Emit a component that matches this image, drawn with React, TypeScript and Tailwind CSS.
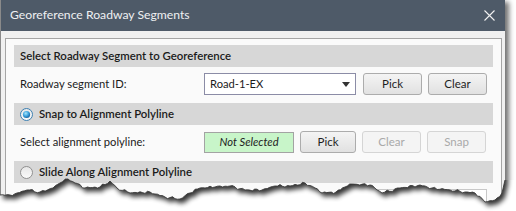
import React from "react";

const FONT = { fontFamily: 'Lato, "Noto Sans", sans-serif' };

// jagged torn-paper edge along the bottom of the screenshot
const EDGE: [number, number][] = [
  [0, 195], [10, 195], [17, 193], [27, 190], [40, 192], [53, 188], [60, 183], [68, 179],
  [75, 183], [85, 188], [100, 187], [110, 181], [117, 188], [130, 193], [150, 192],
  [165, 197], [180, 199], [190, 193], [200, 188], [215, 187], [230, 186], [245, 190],
  [262, 190], [275, 186], [290, 186], [305, 183], [315, 188], [322, 193], [336, 192],
  [345, 187], [352, 184], [370, 185], [382, 193], [400, 188], [420, 185], [432, 188],
  [450, 190], [465, 192], [475, 193], [485, 202], [495, 200], [502, 193], [505, 180],
];

function edgePoints() {
  const pts: [number, number][] = [];
  for (let i = 0; i < EDGE.length - 1; i++) {
    const [x0, y0] = EDGE[i];
    const [x1, y1] = EDGE[i + 1];
    const steps = Math.max(1, Math.round((x1 - x0) / 2.5));
    for (let s = 0; s < steps; s++) {
      const t = s / steps;
      const x = x0 + (x1 - x0) * t;
      const jitter = Math.sin(x * 1.7) * 0.8 + Math.sin(x * 0.53 + 1) * 0.6;
      pts.push([x, y0 + (y1 - y0) * t + (s === 0 ? 0 : jitter)]);
    }
  }
  pts.push(EDGE[EDGE.length - 1]);
  return pts;
}

function TornEdge() {
  const pts = edgePoints();
  const line = pts.map(([x, y], i) => `${i ? "L" : "M"}${x.toFixed(1)},${y.toFixed(1)}`).join(" ");
  const below = `${line} L516,180 L516,211 L0,211 Z`;
  const above = `M0,0 ${line.replace(/^M/, "L")} L505,0 Z`;
  return (
    <svg className="absolute left-0 top-0" width={516} height={211}>
      <defs>
        <filter id="tear-blur" x="-10%" y="-10%" width="130%" height="130%">
          <feGaussianBlur stdDeviation="2.4" />
        </filter>
        <clipPath id="tear-below">
          <path d={below} />
        </clipPath>
      </defs>
      <path d={below} fill="#ffffff" />
      <g clipPath="url(#tear-below)">
        <path d={above} fill="#000" opacity={0.8} filter="url(#tear-blur)" transform="translate(3,4)" />
      </g>
      <path d={line} fill="none" stroke="#3a3a3a" strokeWidth={0.9} />
    </svg>
  );
}

function Btn({ children, w, disabled }: { children: React.ReactNode; w: string; disabled?: boolean }) {
  return (
    <div
      className={`${w} h-[22px] flex items-center justify-center rounded-[3px] border text-[11.5px] ${
        disabled
          ? "border-[#d5d5d5] bg-[#f4f4f4] text-[#a9a9a9]"
          : "border-[#acacac] bg-gradient-to-b from-[#f4f4f4] to-[#e1e1e1] text-[#1e1e1e]"
      }`}
    >
      {children}
    </div>
  );
}

function Radio({ on }: { on?: boolean }) {
  return (
    <svg width={13} height={13} viewBox="0 0 13 13" className="shrink-0">
      <defs>
        <linearGradient id="rg-off" x1="0" y1="0" x2="0" y2="1">
          <stop offset="0" stopColor="#e6e6e6" />
          <stop offset="1" stopColor="#fbfbfb" />
        </linearGradient>
        <radialGradient id="rg-on" cx="0.4" cy="0.35" r="0.7">
          <stop offset="0" stopColor="#a6e6fb" />
          <stop offset="0.55" stopColor="#3aa0dc" />
          <stop offset="1" stopColor="#135a96" />
        </radialGradient>
      </defs>
      <circle cx="6.5" cy="6.5" r="6" fill="url(#rg-off)" stroke={on ? "#3c7fb1" : "#8f8f8f"} strokeWidth="1" />
      {on && <circle cx="6.5" cy="6.5" r="3.6" fill="url(#rg-on)" />}
    </svg>
  );
}

function Band({ children }: { children: React.ReactNode }) {
  return (
    <div className="h-[22px] bg-[#d7d7d7] flex items-center gap-[6px] pl-[6px] text-[11.4px] font-semibold text-[#1b1b1b]">
      {children}
    </div>
  );
}

function Row({ label, children }: { label: string; children: React.ReactNode }) {
  return (
    <div className="h-[22px] mt-[6px] mb-[8px] flex items-center pl-[6px] pr-[6px]">
      <div className="w-[184px] shrink-0 text-[11.2px] text-[#1b1b1b]">{label}</div>
      {children}
    </div>
  );
}

export default function App() {
  return (
    <div className="relative w-[516px] h-[211px] overflow-hidden bg-white" style={FONT}>
      <div className="w-[505px] h-[260px] flex flex-col bg-[#f0f0f0] border-l border-[#8a8a8a] shadow-[4px_2px_5px_rgba(0,0,0,0.55)]">
        <div className="h-[31px] shrink-0 bg-[#4e5a68] flex items-center justify-between pl-[9px] pr-[10px]">
          <span className="text-[12.2px] text-[#eef0f2]">Georeference Roadway Segments</span>
          <svg width={11} height={11} viewBox="0 0 11 11">
            <path d="M0.5 0.5 L10.5 10.5 M10.5 0.5 L0.5 10.5" stroke="#f2f2f2" strokeWidth="1.1" />
          </svg>
        </div>
        <div className="pt-[7px] pl-[4px] pr-[3px]">
          <div className="border border-[#a5a5a5] bg-[#fafafa] pt-[6px] px-[8px]">
            <Band>Select Roadway Segment to Georeference</Band>
            <Row label="Roadway segment ID:">
              <div className="w-[152px] h-[22px] border border-[#8b8ca6] bg-white flex items-center justify-between pl-[5px] pr-[5px] text-[11.2px] text-[#1b1b1b]">
                <span>Road-1-EX</span>
                <svg width={8} height={5} viewBox="0 0 8 5">
                  <path d="M0 0 H8 L4 5 Z" fill="#333" />
                </svg>
              </div>
              <div className="ml-[7px] flex gap-[6px]">
                <Btn w="w-[59px]">Pick</Btn>
                <Btn w="w-[59px]">Clear</Btn>
              </div>
            </Row>
            <Band>
              <Radio on />
              <span>Snap to Alignment Polyline</span>
            </Band>
            <Row label="Select alignment polyline:">
              <div className="w-[90px] h-[21px] border border-[#a3a3a3] bg-[#c8f5c9] flex items-center justify-center text-[11.2px] italic text-[#222]">
                Not Selected
              </div>
              <div className="ml-[6px] flex gap-[6px]">
                <Btn w="w-[56px]">Pick</Btn>
                <Btn w="w-[59px]" disabled>Clear</Btn>
                <Btn w="w-[59px]" disabled>Snap</Btn>
              </div>
            </Row>
            <Band>
              <Radio />
              <span>Slide Along Alignment Polyline</span>
            </Band>
            <Row label="Select alignment polyline:">
              <div className="w-[90px] h-[21px] border border-[#a3a3a3] bg-[#c8f5c9]" />
              <div className="ml-auto w-[124px] h-[22px] border border-[#c8c8c8] bg-white" />
            </Row>
          </div>
        </div>
      </div>
      <TornEdge />
    </div>
  );
}
